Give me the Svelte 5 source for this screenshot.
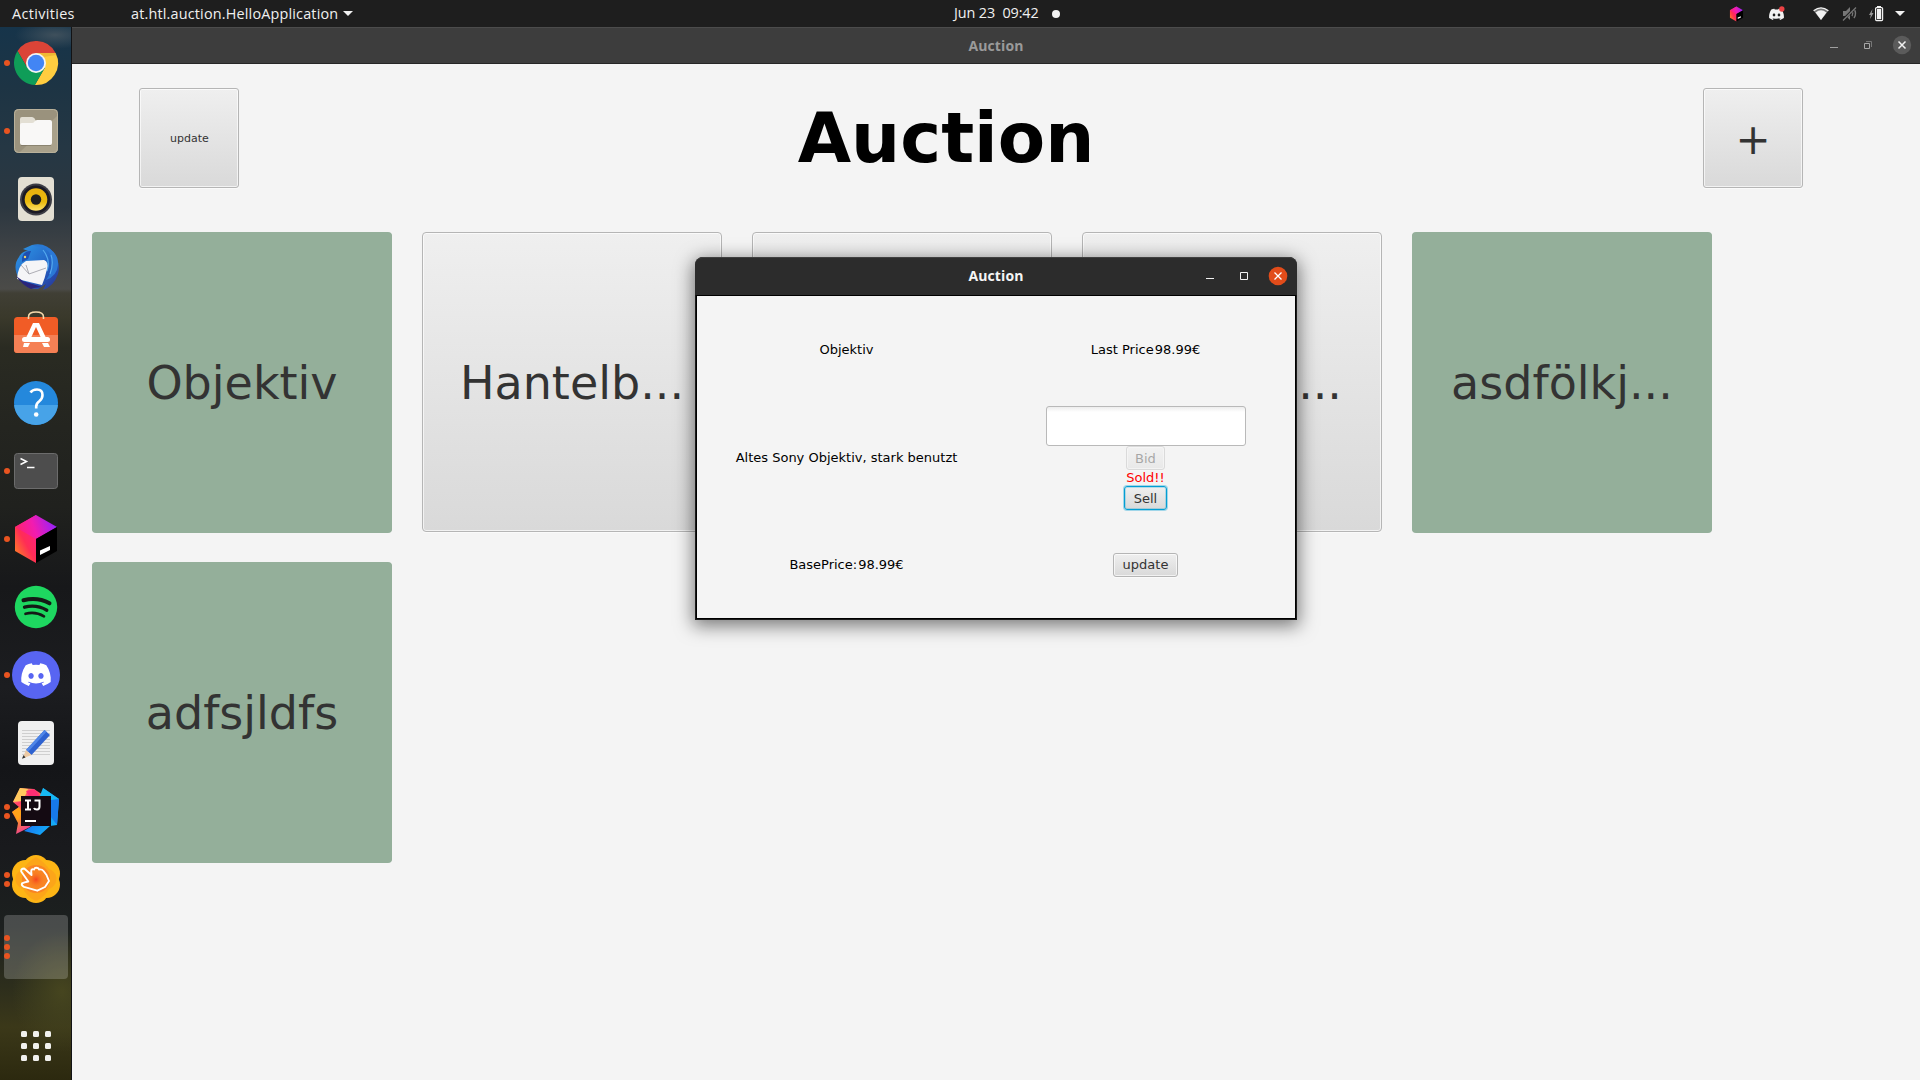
<script>
  const tiles = [
    { name: 'Objektiv', sold: true },
    { name: 'Hantelb...' },
    { name: '' },
    { name: '...', tail: true },
    { name: 'asdfölkj...', sold: true },
    { name: 'adfsjldfs', sold: true }
  ];
  const dock = [
    ['chrome', 1], ['files', 1], ['music', 0], ['mail', 0], ['software', 0], ['help', 0], ['terminal', 1],
    ['toolbox', 1], ['spotify', 0], ['discord', 1], ['editor', 0], ['intellij', 2], ['clicker', 2], ['blank', 3]
  ];
  const discordPath =
    'M19.3 5.3A17 17 0 0 0 15 4l-.6 1.2a16 16 0 0 0-4.8 0L9 4a17 17 0 0 0-4.3 1.3C2 9.4 1.200 13.400 1.600 17.300A17 17 0 0 0 6.900 20l1.100-1.800-1.700-.8.4-.3a12.200 12.200 0 0 0 10.600 0l.4.3-1.700.8L17.100 20a17 17 0 0 0 5.300-2.700c.5-4.500-.8-8.500-3.100-12zM8.500 15c-1 0-1.900-1-1.900-2.100s.8-2.100 1.900-2.100 1.900 1 1.900 2.100S9.500 15 8.500 15zm7 0c-1 0-1.900-1-1.900-2.100s.8-2.100 1.900-2.100 1.900 1 1.900 2.100-.8 2.100-1.900 2.100z';
</script>

{#snippet cube()}
  <path d="M24 0 3 12v24l21 12V24z" fill="url(#cubeL)" />
  <path d="M24 0 3 12l21 12 21-12z" fill="url(#cubeT)" />
  <path d="M24 24 45 12v24L24 48z" fill="#000" />
  <path d="M28 35.500 38 31v4l-10 5z" fill="#fff" />
{/snippet}

<svg class="defs" width="0" height="0" aria-hidden="true">
  <defs>
    <linearGradient id="cubeL" x1="0" y1="1" x2=".8" y2="0"><stop offset="0" stop-color="#ff9419" /><stop offset=".5" stop-color="#ff2d55" /><stop offset="1" stop-color="#ff1a8c" /></linearGradient>
    <linearGradient id="cubeT" x1="0" y1=".6" x2="1" y2=".4"><stop offset="0" stop-color="#ff2368" /><stop offset=".45" stop-color="#f21cb0" /><stop offset="1" stop-color="#8f22ff" /></linearGradient>
    <linearGradient id="yel" x1="0" y1="0" x2="0" y2="1"><stop offset="0" stop-color="#e8b010" /><stop offset=".6" stop-color="#eab90c" /><stop offset="1" stop-color="#ffe36a" /></linearGradient>
    <linearGradient id="bird" x1="0" y1="0" x2="1" y2="1"><stop offset="0" stop-color="#2f9ae8" /><stop offset=".6" stop-color="#2361c4" /><stop offset="1" stop-color="#2b2f8e" /></linearGradient>
    <linearGradient id="ijl" x1="0" y1="0" x2=".5" y2="1"><stop offset="0" stop-color="#ffc45a" /><stop offset=".35" stop-color="#ff3d6b" /><stop offset=".6" stop-color="#ff9a1e" /><stop offset="1" stop-color="#e91ebd" /></linearGradient>
    <linearGradient id="ijr" x1="0" y1="0" x2="1" y2="1"><stop offset="0" stop-color="#12c8f6" /><stop offset=".5" stop-color="#1681f4" /><stop offset="1" stop-color="#14c6f7" /></linearGradient>
    <radialGradient id="hot"><stop offset="0" stop-color="#f4431f" /><stop offset="1" stop-color="#f98423" stop-opacity="0" /></radialGradient>
  </defs>
</svg>

<div class="screen">
  <header class="topbar">
    <span class="activities">Activities</span>
    <span class="appname">at.htl.auction.HelloApplication</span>
    <i class="caret"></i>
    <span class="clock">Jun 23&nbsp; 09:42</span>
    <i class="notify"></i>
    <div class="tray">
      <svg class="t-cube" width="15" height="16" viewBox="0 0 48 48">{@render cube()}</svg>
      <svg class="t-disc" width="17" height="16" viewBox="0 0 24 22"><path d={discordPath} fill="#f2f2f2" transform="translate(0,-.5)" /><circle cx="19.500" cy="4" r="3.800" fill="#ed4245" /></svg>
      <svg class="t-wifi" width="16" height="14" viewBox="0 0 16 14"><path d="M.6 3.800Q8-2.200 15.400 3.800L8 13z" fill="#777" /><path d="M.6 3.800Q8-2.200 15.400 3.800" fill="none" stroke="#f2f2f2" stroke-width="1.300" /><path d="M2.500 5.400Q8 1.200 13.500 5.400L8 13z" fill="#f2f2f2" /></svg>
      <svg class="t-mute" width="16" height="15" viewBox="0 0 16 15"><path d="M1 5h3l4-4v13l-4-4H1z" fill="#777" /><path d="M10 5q1.500 2.500 0 5M12 3q3 4.500 0 9" stroke="#777" stroke-width="1.500" fill="none" /><path d="M1 14 14 1" stroke="#1e1e1e" stroke-width="2.500" /><path d="M1 14.500 14 1.500" stroke="#777" stroke-width="1.200" /></svg>
      <svg class="t-batt" width="15" height="16" viewBox="0 0 15 16"><path d="M3.500 3 0 9h1.800L1 13l3.500-6H2.700z" fill="#999" /><path d="M8 0h4v1.500H8z" fill="#f2f2f2" /><rect x="6.600" y="1.600" width="7" height="13" rx="1" fill="none" stroke="#f2f2f2" stroke-width="1.200" /><rect x="8" y="3" width="4.200" height="10.200" fill="#f2f2f2" /></svg>
      <i class="caret end"></i>
    </div>
  </header>

  <div class="desktop">
    <nav class="dock">
      {#each dock as [icon, dots]}
        <div class="slot" class:active={icon === 'blank'}>
          <div class="dots">{#each Array(dots) as _}<i></i>{/each}</div>
          <svg width="48" height="48" viewBox="0 0 48 48">
            {#if icon === 'chrome'}
              <path d="M15.340 29 5.540 12.030A22 22 0 0 1 43.600 14H24z" fill="#db4437" />
              <path d="M24 14h19.600A22 22 0 0 1 22.860 45.970L32.660 29z" fill="#ffcd40" />
              <path d="M32.660 29 22.860 45.970A22 22 0 0 1 5.540 12.030L15.340 29z" fill="#0f9d58" />
              <path d="M24 14h19.600l.8 2-13 2z" fill="#d99a20" opacity=".4" />
              <circle cx="24" cy="24" r="10" fill="#f4f4f4" /><circle cx="24" cy="24" r="8.200" fill="#4285f4" />
            {:else if icon === 'files'}
              <rect x="2" y="2" width="44" height="44" rx="4.500" fill="#9a927d" /><path d="M46 8v33.500a4.500 4.500 0 0 1-4.500 4.500H7z" fill="#a9a18b" />
              <rect x="2.500" y="2.500" width="43" height="43" rx="4" fill="none" stroke="#b9b19b" />
              <path d="M8 12q0-2 2-2h10q1.500 0 2.500 1.500L24 14v6H8z" fill="#e3dfd4" /><path d="M8 18q0-2 2-2h10q1.500 0 2.500-1.500T25 13h13q2 0 2 2v21q0 2-2 2H10q-2 0-2-2z" fill="#f9f8f7" />
              <path d="M9 38.500h30" stroke="#6f6856" opacity=".5" />
            {:else if icon === 'music'}
              <rect x="6" y="2" width="36" height="44" rx="4" fill="#e3dfd3" /><circle cx="24" cy="24.500" r="16" fill="#3d3d45" /><circle cx="24" cy="24.500" r="14" fill="#1b1a24" /><circle cx="24" cy="24.500" r="11.300" fill="url(#yel)" /><circle cx="24" cy="24.500" r="5.200" fill="#1f1f1f" />
            {:else if icon === 'mail'}
              <path d="M11 6 20 2q14-3 22 8 7 11 4 21-4 12-15 16l3-6-8 5q-12 0-19-10-7-13 0-22 3-6 9-6z" fill="url(#bird)" />
              <path d="M20 3q16-1 19 11 3 12-5 23 11-4 12-15 1-10-8-16-9-6-18-3z" fill="#2b78d5" /><path d="M31 7q8 10 4 21m4-16q3 8-1 19" stroke="#54a9ee" fill="none" stroke-width="1.200" />
              <path d="M5 36q1-14 9-18l18-1q5 2 3 9-2 9-5 16z" fill="#f5f5f7" /><path d="m9 22 8 9 17-6M17 31l-3-9" stroke="#a5a5ad" fill="none" stroke-width=".9" />
              <path d="m4 33 7 5 19 6-8 1-3 1q-9-4-15-13z" fill="#29257c" /><path d="M10 17q0-9 9-9l-3 8-6 3z" fill="#1d4fb0" /><circle cx="13" cy="14" r="1.200" fill="#eed36a" />
            {:else if icon === 'software'}
              <rect x="2" y="6" width="44" height="36" rx="3.500" fill="#f15c26" /><path d="M2 24h44v14.500a3.500 3.500 0 0 1-3.500 3.500h-37A3.500 3.500 0 0 1 2 38.500z" fill="#f58055" />
              <path d="M16.500 8V6q0-5 7.500-5t7.500 5v2" fill="none" stroke="#f6d9ac" stroke-width="1.600" />
              <path d="M21 12h6l8 17h-5l-6-13-6 13h-5zM12 32h6l-2 4h-5zm18 0h6l2 4h-6z" fill="#fff" /><rect x="10" y="26" width="28" height="5" rx="2.500" fill="#fff" />
            {:else if icon === 'help'}
              <circle cx="24" cy="24" r="22" fill="#2488dc" /><path d="M2.100 26h43.800a22 22 0 0 1-43.800 0z" fill="#47a3e8" />
              <path d="M18.500 13.500q2-3 6.500-3 5.500 0 5.500 5.500 0 3.500-3 6-3.300 2.500-3.300 5.500v2" fill="none" stroke="#fff" stroke-width="2.600" /><circle cx="24.200" cy="35.500" r="2.300" fill="#fff" />
            {:else if icon === 'terminal'}
              <rect x="2.500" y="6.500" width="43" height="35" rx="3" fill="#4d4d4d" stroke="#6c6c6c" /><path d="m8.500 11.500 6 3-6 3M15 20.500h7.500" stroke="#fff" stroke-width="1.500" fill="none" />
            {:else if icon === 'toolbox'}
              {@render cube()}
            {:else if icon === 'spotify'}
              <circle cx="24" cy="24" r="21.200" fill="#1ed760" /><g fill="none" stroke="#141a16" stroke-linecap="round"><path d="M11.500 17.300q14-3.500 26 3" stroke-width="4" /><path d="M12.500 24.200q12-3 22.300 3" stroke-width="3.300" /><path d="M13.500 30.800q10-2.600 18.500 2.500" stroke-width="2.600" /></g>
            {:else if icon === 'discord'}
              <circle cx="24" cy="24" r="24" fill="#5865f2" /><path d={discordPath} fill="#fff" transform="translate(7.100,6.700) scale(1.410)" />
            {:else if icon === 'editor'}
              <rect x="6" y="2" width="36" height="44" rx="4" fill="#f0f0f0" /><path d="M10 11.500h28M10 14.500h28M10 17.500h28M10 20.500h28M10 23.500h28M10 26.500h28M10 29.500h28M10 32.500h28M10 35.500h28" stroke="#cfcfcf" />
              <path d="m14 31 18.500-20 5.500 5-18.500 20z" fill="#2e62d0" /><path d="m14 31 18.500-20 2 1.800L16 33z" fill="#4f86e8" /><path d="m14 31 5.500 5-9 3.500z" fill="#ecc9a3" /><path d="m11.500 36 2 2.500-3.500 1.200z" fill="#333" />
            {:else if icon === 'intellij'}
              <path d="m8 1 14 1 12 8L18 40 4 47 6 36 0 25l7-5-6-5z" fill="url(#ijl)" /><path d="m8 1 8 1-5 12-10 1z" fill="#ffc95e" /><path d="m22 2-8 2 8 14 6-9z" fill="#ff2e74" /><path d="m7 20-7 5 6 8 4-7z" fill="#ffa31a" />
              <path d="m31 1 16 11-2 26-7 1-10 9-16-4 16-10z" fill="url(#ijr)" /><path d="m31 1 16 11-10 5-10-6z" fill="#17b7f2" /><path d="m39 13 8-1-2 26-6-8z" fill="#1779ea" />
              <rect x="9" y="9" width="30" height="30" fill="#140a12" /><path d="M13 13.500h6M16 13.500v9M13 22.500h6M22.500 13.500h5v6q0 3-2.500 3t-3-1.500" fill="none" stroke="#fff" stroke-width="2" /><path d="M13 34h11" stroke="#fff" stroke-width="2" />
            {:else if icon === 'clicker'}
              <g fill="#fdb515"><circle cx="24" cy="13" r="13" /><circle cx="24" cy="35" r="13" /><circle cx="13.500" cy="18.500" r="13.500" /><circle cx="34.500" cy="18.500" r="13.500" /><circle cx="13.500" cy="29.500" r="13.500" /><circle cx="34.500" cy="29.500" r="13.500" /></g>
              <path d="M24 2c9 5 13 12 13 12 10 4 10 16 0 20-5 9-13 12-13 12s-8-3-13-12C1 30 1 18 11 14c0 0 4-7 13-12z" fill="#fb9b1c" opacity=".6" /><circle cx="24" cy="24" r="14" fill="#f98423" /><circle cx="24" cy="24.500" r="9" fill="url(#hot)" />
              <path d="M16.300 26.500 9.200 16.500q-.5-3 3-3l7.300 6.500-.3-4q.5-2.500 2.800-1.500 1-2.500 3.500-1.500 1 0 1.500 1.500 3-.5 4.500 1.500L34.500 20 37 26l-4 6-7.700 3.700L12 31.800q-3-1.500-2-3.500 2-1 6.300-1.800z" fill="none" stroke="#fff" stroke-width="1.900" stroke-linejoin="round" />
            {/if}
          </svg>
        </div>
      {/each}
      <div class="apps">{#each Array(9) as _}<i></i>{/each}</div>
    </nav>

    <section class="window">
      <div class="titlebar">
        <b>Auction</b>
        <svg class="wc" width="96" height="35" viewBox="0 0 96 35"><path d="M6 19.500h8" stroke="#a0a0a0" /><path d="M40.500 15.500h5v5h-5z" fill="none" stroke="#a8a8a8" /><path d="M42 13.500h5.500v5.500" fill="none" stroke="#777" /><circle cx="78" cy="17" r="9.200" fill="#5b5b5b" /><path d="m74.500 13.500 7 7m0-7-7 7" stroke="#f2f2f2" stroke-width="1.500" /></svg>
      </div>
      <div class="head">
        <button class="fx square small">update</button>
        <h1>Auction</h1>
        <button class="fx square plus">+</button>
      </div>
      <div class="tiles">
        {#each tiles as tile}
          <button class="fx tile" class:sold={tile.sold} class:tail={tile.tail}>{tile.name}</button>
        {/each}
      </div>
    </section>
  </div>

  <div class="dialog">
    <div class="dlgbar">
      <b>Auction</b>
      <svg class="wc" width="96" height="37" viewBox="0 0 96 37"><path d="M5 20.500h8" stroke="#f2f2f2" /><path d="M39.500 14.500h7v7h-7z" fill="none" stroke="#f2f2f2" /><circle cx="77" cy="18" r="9.300" fill="#e24c1a" /><path d="m73.500 14.500 7 7m0-7-7 7" stroke="#fff" stroke-width="1.300" /></svg>
    </div>
    <div class="form">
      <span>Objektiv</span>
      <div class="pair"><span>Last Price</span><span>98.99€</span></div>
      <span>Altes Sony Objektiv, stark benutzt</span>
      <div class="bid">
        <input type="text" aria-label="Bid" />
        <button class="fx btn off">Bid</button>
        <span class="red">Sold!!</span>
        <button class="fx btn focus">Sell</button>
      </div>
      <div class="pair"><span>BasePrice:</span><span>98.99€</span></div>
      <button class="fx btn">update</button>
    </div>
  </div>
</div>

<style>
  :global(body) { overflow: hidden; }
  .defs { position: absolute; }
  .screen { width: 1920px; height: 1080px; display: flex; flex-direction: column; position: relative; overflow: hidden; font-family: 'DejaVu Sans', sans-serif; }
  .topbar { height: 27px; flex: none; background: #1e1e1e; color: #f0f0f0; display: flex; align-items: center; font: 14.400px/27px 'Open Sans', 'Noto Sans', sans-serif; white-space: nowrap; }
  .activities { width: 119px; padding-left: 12px; letter-spacing: .35px; }
  .appname { width: 208px; letter-spacing: .18px; }
  .caret { border: 5px solid transparent; border-top-color: #f2f2f2; border-bottom: 0; margin-left: 4px; }
  .clock { margin-left: 601px; width: 98px; letter-spacing: -.1px; line-height: 25px; padding-bottom: 2px; }
  .notify { width: 8px; height: 8px; border-radius: 50%; background: #f2f2f2; }
  .tray { margin-left: auto; display: flex; align-items: center; padding-right: 15px; }
  .t-disc { margin-left: 24px; }
  .t-wifi { margin-left: 28px; }
  .t-mute { margin-left: 13px; }
  .t-batt { margin-left: 11px; }
  .end { margin-left: 11px; }

  .desktop { flex: 1; display: flex; }
  .dock { width: 72px; flex: none; box-sizing: border-box; border-right: 1px solid #121315; padding-top: 2px; position: relative; display: flex; flex-direction: column;
    background:
      radial-gradient(ellipse 40px 14px at 55px 8px, #3f505c 0, transparent 100%),
      radial-gradient(ellipse 50px 60px at 62px 965px, #46451f 0, transparent 100%),
      linear-gradient(#16344a 0, #1d3444 60px, #253744 120px, #2c3740 180px, #3f4346 225px, #4b4b48 262px, #403f35 266px, #3a392b 290px, #2a2b22 320px, #242520 400px, #20211e 480px, #17181a 560px, #1c1d20 660px, #141518 740px, #191a1d 820px, #1c201f 900px, #2d2e1c 960px, #3b3819 1000px, #2c290f 1053px); }
  .slot { height: 68px; display: flex; align-items: center; position: relative; }
  .slot svg { margin-left: 12px; overflow: visible; position: relative; }
  .slot.active::before { content: ''; position: absolute; left: 4px; top: 2px; width: 64px; height: 64px; border-radius: 4px; background: rgba(255, 255, 255, .2); }
  .dots { position: absolute; left: 4px; top: 0; height: 68px; display: flex; flex-direction: column; justify-content: center; gap: 3px; }
  .dots i { width: 6px; height: 6px; border-radius: 50%; background: #e95420; }
  .apps { display: grid; grid-template-columns: repeat(3, 6px); grid-auto-rows: 6px; gap: 6px; margin: 50px 0 0 21px; }
  .apps i { background: #f1f1ee; border-radius: 1.500px; }

  .window { flex: 1; background: #f4f4f4; display: flex; flex-direction: column; }
  .titlebar { height: 37px; box-sizing: border-box; flex: none; background: #3d3d3d; border-top: 1px solid #4c4c4c; border-bottom: 1px solid #262626; display: grid; grid-template-columns: 1fr auto 1fr; align-items: center; color: #9a9a9a; font: 14px 'Open Sans', sans-serif; }
  .titlebar b, .dlgbar b { grid-column: 2; font-weight: 700; line-height: 19px; letter-spacing: .1px; }
  .dlgbar b { line-height: 18px; padding-bottom: 1px; }
  .wc { justify-self: end; }
  .head { height: 100px; flex: none; margin: 24px 117px 0 67px; display: flex; justify-content: space-between; align-items: center; }
  h1 { margin: 0 50px 0 0; font-size: 69px; line-height: 100px; font-weight: 700; color: #000; }
  .fx { box-sizing: border-box; border: 1px solid #b5b5b5; border-radius: 3px; margin: 0; padding: 0; font-family: 'DejaVu Sans', sans-serif; color: #333; background: linear-gradient(#efefef, #d9d9d9); box-shadow: inset 0 0 0 1px rgba(255, 255, 255, .65), 0 1px 0 #fafafa; white-space: nowrap; }
  .square { width: 100px; height: 100px; }
  .small { font-size: 11px; padding-left: 1px; }
  .plus { font-size: 42px; padding-top: 2px; }
  .tiles { display: grid; grid-template-columns: repeat(5, 300px); grid-auto-rows: 300px; gap: 30px; margin: 44px 0 0 20px; }
  .tile { font-size: 46px; border-radius: 4px; padding-top: 1px; }
  .tile.sold { background: #94af9a; border: 0; box-shadow: 0 1px 0 #94af9a; }
  .tile.tail { text-align: right; padding-right: 39px; }

  .dialog { position: absolute; left: 695px; top: 257px; width: 602px; height: 363px; box-sizing: border-box; background: #1a1a1a; border-radius: 8px 8px 0 0; box-shadow: 0 4px 18px 2px rgba(0, 0, 0, .5); display: flex; flex-direction: column; padding: 0 1px 1px; }
  .dlgbar { height: 38px; flex: none; margin: 0 -1px; box-sizing: border-box; background: #2c2c2c; border-top: 1px solid #404040; border-radius: 8px 8px 0 0; color: #f5f5f5; font: 14px 'Open Sans', sans-serif; display: grid; grid-template-columns: 1fr auto 1fr; align-items: center; }
  .form { flex: 1; background: #f4f4f4; border: 1px solid #000; display: grid; grid-template-columns: 1fr 1fr; grid-template-rows: 107px 108px minmax(0, 1fr); place-items: center; font-size: 13px; color: #000; }
  .pair { display: flex; gap: 1px; }
  .bid { display: flex; flex-direction: column; align-items: center; margin-top: 2px; }
  input { width: 200px; height: 40px; box-sizing: border-box; border: 1px solid #b9b9b9; border-radius: 3px; padding: 0; margin: 0; background: linear-gradient(#ededed, #fff 5px); }
  .btn { height: 24px; padding: 0 8.500px; font-size: 13px; }
  .off { opacity: .4; }
  .red { color: #f00; line-height: 16px; }
  .focus { border: 1px solid #039ed3; box-shadow: 0 0 0 1px rgba(3, 158, 211, .35), inset 0 0 0 1px rgba(3, 158, 211, .25); }
</style>
